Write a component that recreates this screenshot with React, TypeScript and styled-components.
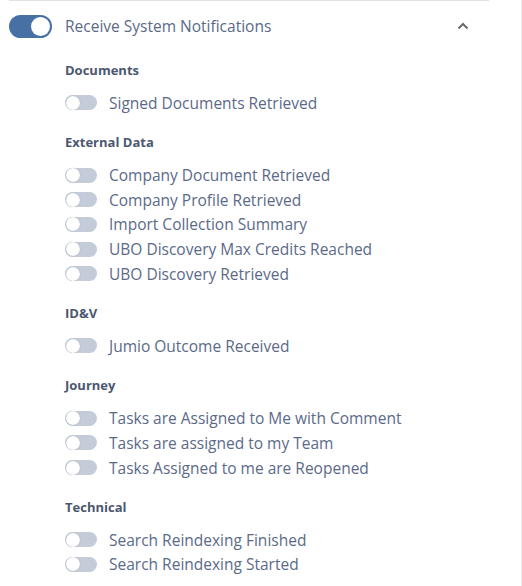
import React from "react";
import styled, { createGlobalStyle } from "styled-components";

const Global = createGlobalStyle`
  html, body { margin: 0; padding: 0; background: #fff; }
  body { font-family: "Open Sans", "Lato", sans-serif; }
`;

const Panel = styled.div`
  width: 521px;
  height: 586px;
  border-right: 1px solid #ececec;
  box-sizing: content-box;
  overflow: hidden;
`;

const TopRule = styled.div`
  margin-left: 9px;
  width: 480px;
  height: 1px;
  background: #e2e2e2;
`;

const Header = styled.div`
  height: 50px;
  display: flex;
  align-items: center;
  padding-left: 9px;
  padding-right: 52px;
`;

const Track = styled.span<{ $on?: boolean; $big?: boolean }>`
  position: relative;
  flex: none;
  display: inline-block;
  width: ${(p) => (p.$big ? 43 : 32)}px;
  height: ${(p) => (p.$big ? 23 : 15)}px;
  border-radius: 12px;
  background: ${(p) => (p.$on ? "#4771a5" : "#c3ccd8")};
`;

const Knob = styled.span<{ $on?: boolean; $big?: boolean }>`
  position: absolute;
  top: ${(p) => (p.$big ? 2 : 0.5)}px;
  ${(p) => (p.$on ? "right: 2px;" : "left: 1px;")}
  width: ${(p) => (p.$big ? 19 : 14)}px;
  height: ${(p) => (p.$big ? 19 : 14)}px;
  border-radius: 50%;
  background: #fff;
  box-shadow: ${(p) => (p.$big ? "none" : "0 0 1px rgba(0,0,0,0.35)")};
`;

const HeaderLabel = styled.span`
  margin-left: 13px;
  flex: 1;
  font-size: 15.5px;
  color: #5b6a88;
`;

const Chevron = styled.svg`
  flex: none;
`;

const Sections = styled.div`
  padding-left: 65px;
  padding-top: 9px;
  display: flex;
  flex-direction: column;
  gap: 17px;
`;

const Section = styled.div`
  display: flex;
  flex-direction: column;
`;

const Title = styled.div`
  height: 20px;
  line-height: 20px;
  font-size: 13px;
  font-weight: 700;
  color: #4c5870;
  margin-bottom: 10.5px;
`;

const Row = styled.div`
  height: 24.7px;
  display: flex;
  align-items: center;
`;

const RowLabel = styled.span`
  margin-left: 12px;
  font-size: 15.5px;
  color: #5b6a88;
  white-space: nowrap;
`;

const Toggle = ({ on, big }: { on?: boolean; big?: boolean }) => (
  <Track $on={on} $big={big}>
    <Knob $on={on} $big={big} />
  </Track>
);

const data: { title: string; items: string[] }[] = [
  { title: "Documents", items: ["Signed Documents Retrieved"] },
  {
    title: "External Data",
    items: [
      "Company Document Retrieved",
      "Company Profile Retrieved",
      "Import Collection Summary",
      "UBO Discovery Max Credits Reached",
      "UBO Discovery Retrieved",
    ],
  },
  { title: "ID&V", items: ["Jumio Outcome Received"] },
  {
    title: "Journey",
    items: [
      "Tasks are Assigned to Me with Comment",
      "Tasks are assigned to my Team",
      "Tasks Assigned to me are Reopened",
    ],
  },
  {
    title: "Technical",
    items: ["Search Reindexing Finished", "Search Reindexing Started"],
  },
];

export default function App() {
  return (
    <>
      <Global />
      <Panel>
        <TopRule />
        <Header>
          <Toggle on big />
          <HeaderLabel>Receive System Notifications</HeaderLabel>
          <Chevron width="12" height="8" viewBox="0 0 12 8">
            <path d="M1.5 6.5 L6 2 L10.5 6.5" fill="none" stroke="#6b6b6b" strokeWidth="2" />
          </Chevron>
        </Header>
        <Sections>
          {data.map((s) => (
            <Section key={s.title}>
              <Title>{s.title}</Title>
              {s.items.map((it) => (
                <Row key={it}>
                  <Toggle />
                  <RowLabel>{it}</RowLabel>
                </Row>
              ))}
            </Section>
          ))}
        </Sections>
      </Panel>
    </>
  );
}
